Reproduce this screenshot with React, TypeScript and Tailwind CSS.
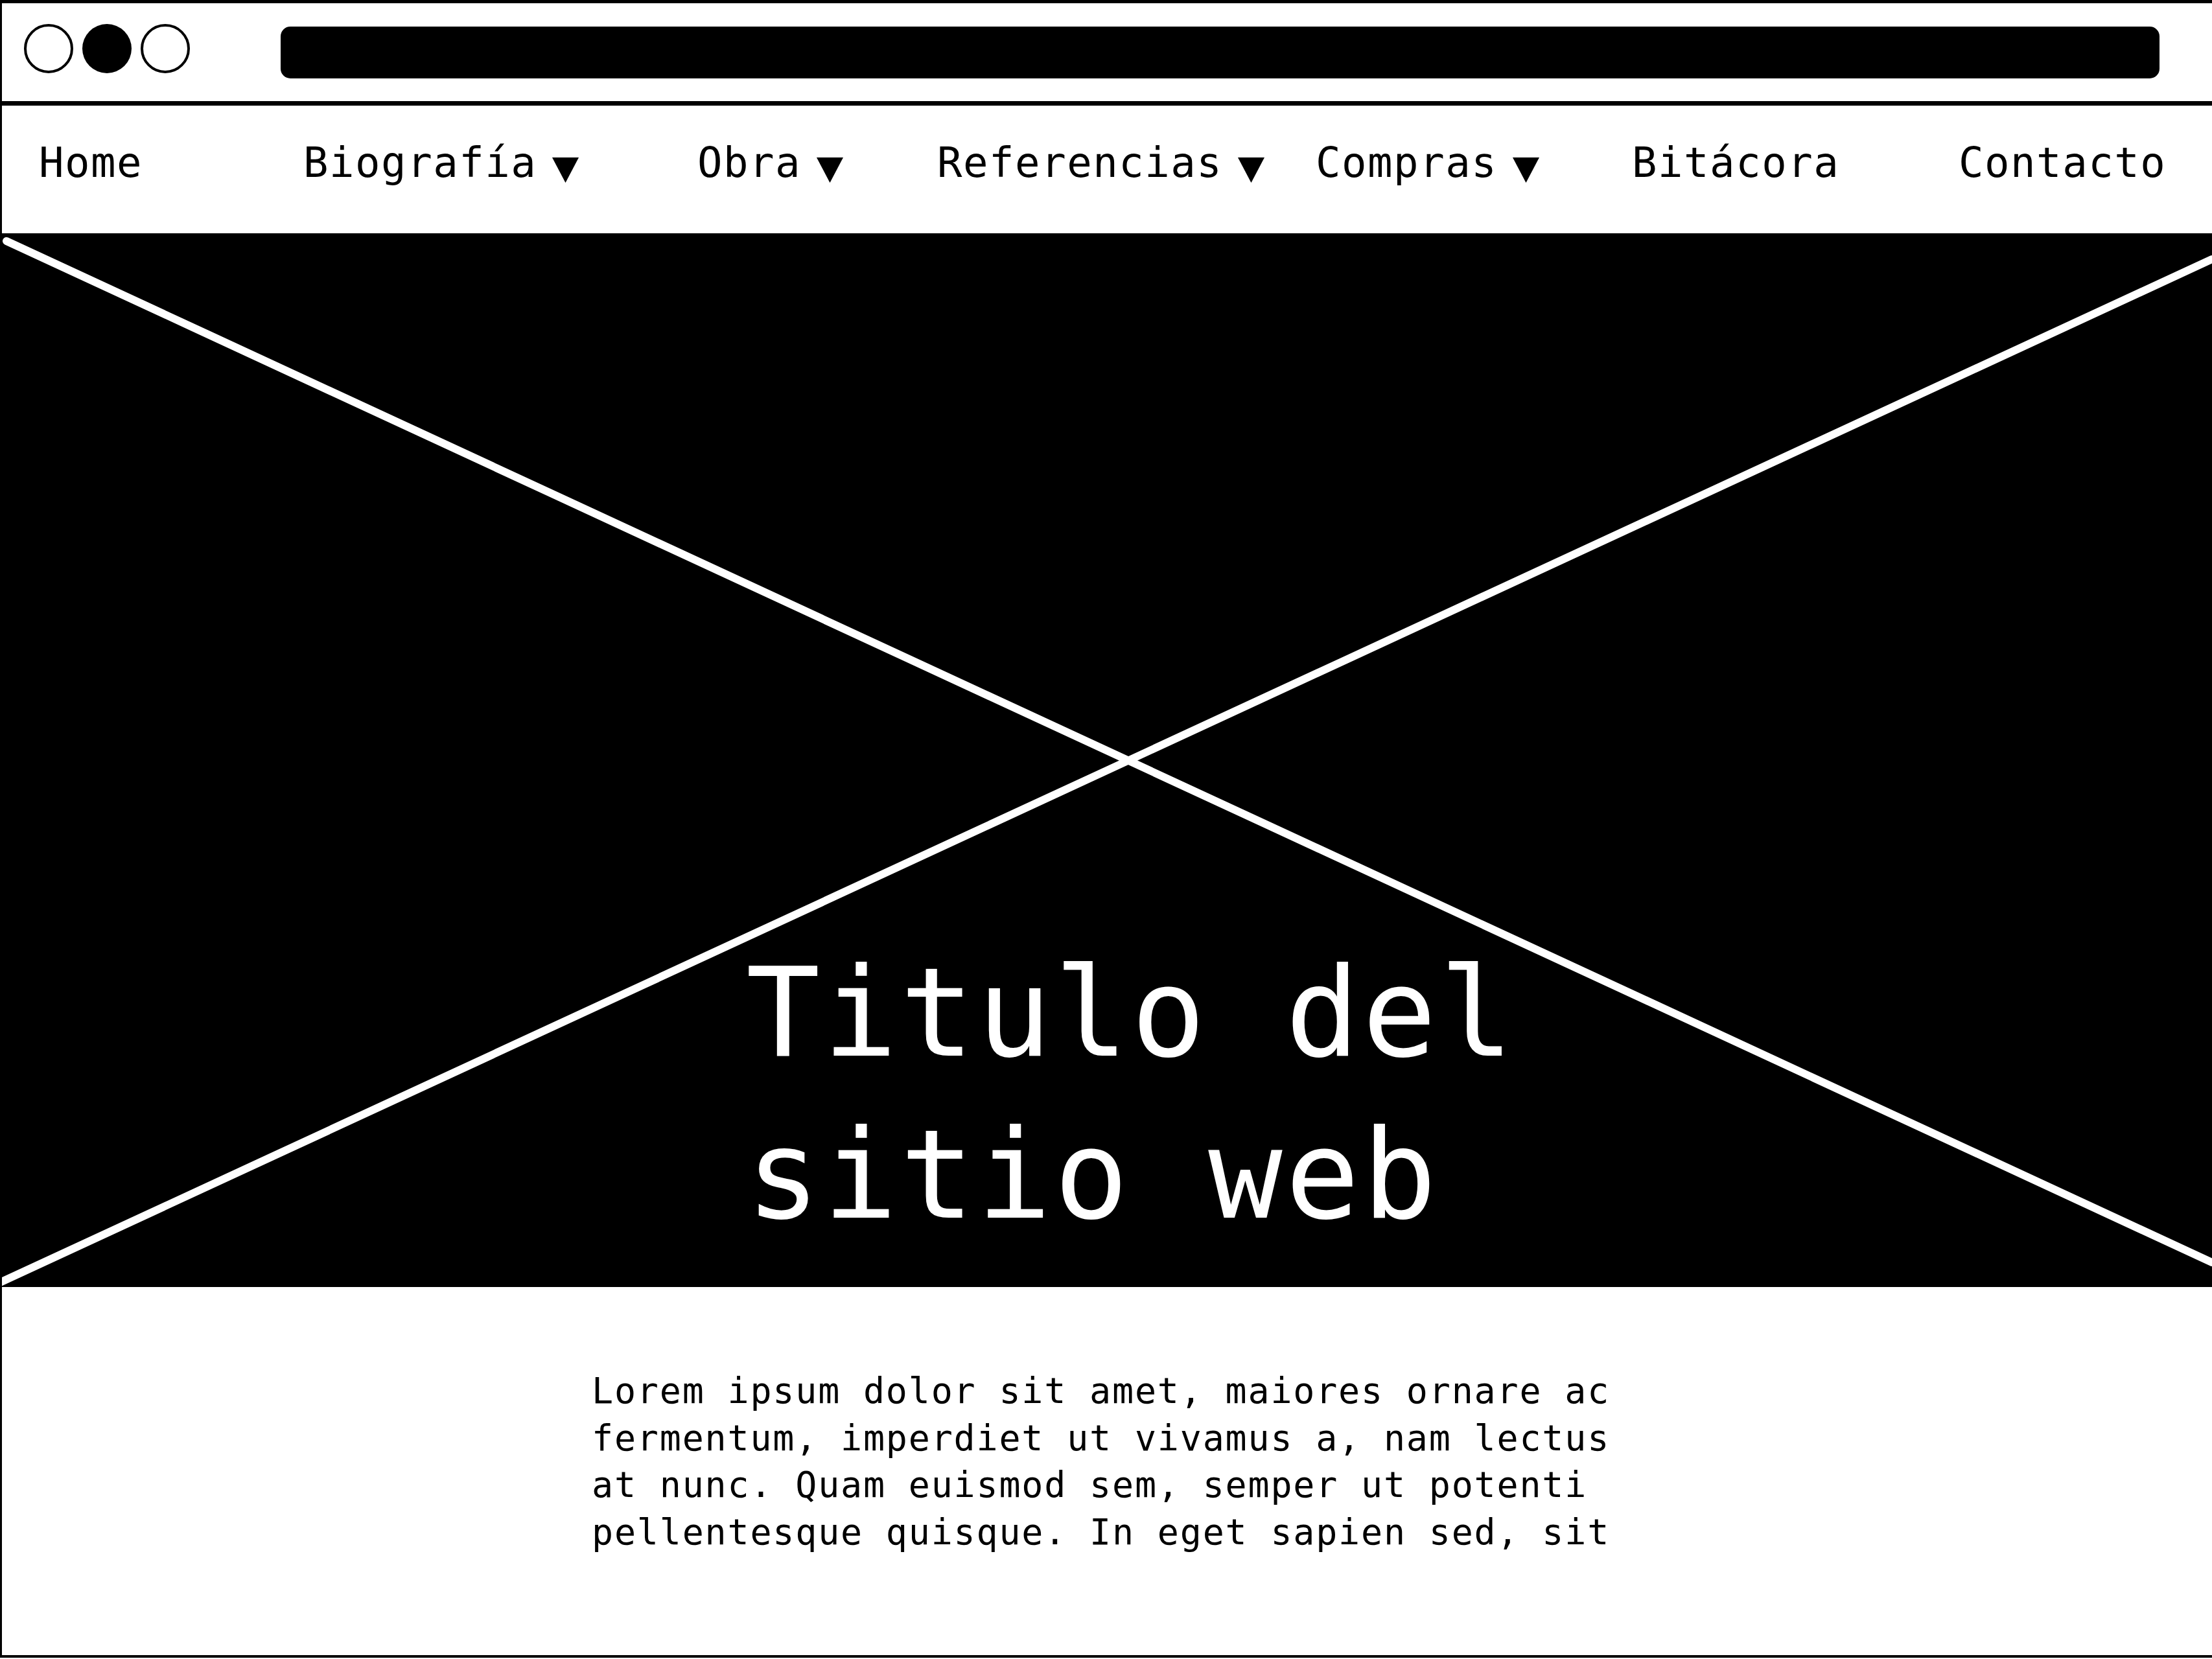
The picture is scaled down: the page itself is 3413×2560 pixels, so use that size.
const mono = "font-['DejaVu_Sans_Mono','Liberation_Mono',monospace]";

const navItems = [
  { label: "Home", width: "w-[408px]", caret: false },
  { label: "Biografía", width: "w-[608px]", caret: true },
  { label: "Obra", width: "w-[370px]", caret: true },
  { label: "Referencias", width: "w-[584px]", caret: true },
  { label: "Compras", width: "w-[488px]", caret: true },
  { label: "Bitácora", width: "w-[504px]", caret: false },
  { label: "Contacto", width: "flex-1", caret: false },
];

function Caret() {
  return (
    <svg width="41" height="39" viewBox="0 0 41 39" className="ml-[24px] mt-[24px] shrink-0">
      <polygon points="0,0 41,0 20.5,39" fill="black" />
    </svg>
  );
}

function BrowserBar() {
  return (
    <div className="h-[151px] flex items-start">
      {/* los tres botones de la ventana */}
      <div className="ml-[34px] mt-[32px] flex gap-[14px]">
        <div className="w-[76px] h-[76px] rounded-full border-[4px] border-black bg-white" />
        <div className="w-[76px] h-[76px] rounded-full bg-black" />
        <div className="w-[76px] h-[76px] rounded-full border-[4px] border-black bg-white" />
      </div>
      <div className="ml-[140px] mt-[36px] w-[2899px] h-[80px] rounded-[15px] bg-black" />
    </div>
  );
}

function NavBar() {
  return (
    <nav className={`h-[204px] border-t-[7px] border-black flex items-start pl-[57px] pt-[56px] ${mono}`}>
      {navItems.map((item) => (
        <div key={item.label} className={`${item.width} flex items-start`}>
          <span className="text-[64px] leading-[64px] tracking-[1.5px] text-black whitespace-nowrap">{item.label}</span>
          {item.caret && <Caret />}
        </div>
      ))}
    </nav>
  );
}

function Hero() {
  return (
    <section className="relative h-[1626px] bg-black overflow-hidden">
      {/* placeholder de imagen: la X */}
      <svg
        className="absolute inset-0 w-full h-full"
        viewBox="0 0 3410 1626"
        preserveAspectRatio="none"
      >
        <line x1="7" y1="12" x2="3410" y2="1588" stroke="white" strokeWidth="12" strokeLinecap="round" />
        <line x1="-3" y1="1619" x2="3410" y2="40" stroke="white" strokeWidth="12" strokeLinecap="round" />
      </svg>
      <h1
        className={`relative pl-[1148px] pt-[1079px] text-white text-[190px] leading-[250px] tracking-[4.5px] font-normal ${mono}`}
      >
        Titulo del
        <br />
        sitio web
      </h1>
    </section>
  );
}

export default function App() {
  return (
    <div className="w-[3413px] h-[2560px] bg-white">
      <div className="flex flex-col border-t-[5px] border-l-[3px] border-b-[4px] border-black">
        <BrowserBar />
        <NavBar />
        <Hero />
        <section className="h-[568px] flex justify-center pt-[124px]">
          <p className={`w-[1590px] text-[55px] leading-[72.7px] tracking-[1.8px] text-black ${mono}`}>
            Lorem ipsum dolor sit amet, maiores ornare ac fermentum, imperdiet ut vivamus a, nam lectus at nunc. Quam euismod sem, semper ut potenti pellentesque quisque. In eget sapien sed, sit
          </p>
        </section>
      </div>
    </div>
  );
}
